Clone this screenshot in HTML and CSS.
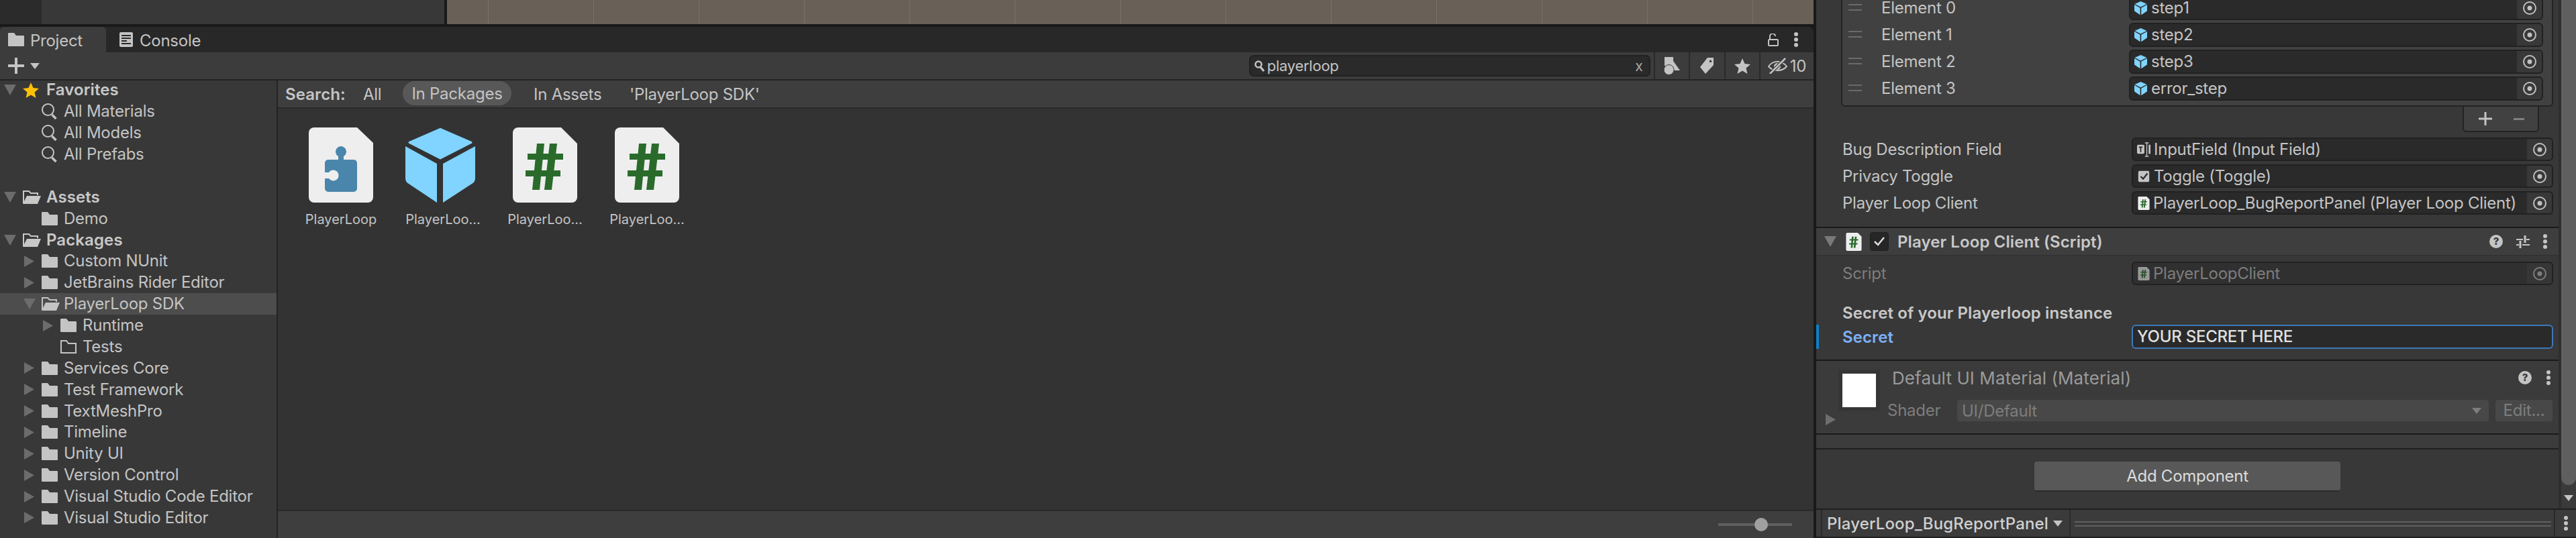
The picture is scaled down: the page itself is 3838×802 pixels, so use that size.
FILE: index.html
```html
<!DOCTYPE html>
<html lang="en">
<head>
<meta charset="utf-8">
<title>Unity Editor - Project and Inspector</title>
<link rel="stylesheet" href="styles.css">
</head>
<body>
<svg class="defs" width="0" height="0" aria-hidden="true">
  <symbol id="folder" viewBox="0 0 24 20"><path d="M1 0h8l3 4h11a1 1 0 0 1 1 1v14a1 1 0 0 1-1 1H1a1 1 0 0 1-1-1V1a1 1 0 0 1 1-1z" fill="currentColor"/></symbol>
  <symbol id="folder-open" viewBox="0 0 27 20"><path d="M1 19V1h8l3 3h10v3" fill="none" stroke="currentColor" stroke-width="2"/><path d="M6 8h21l-5 12H0z" fill="currentColor"/></symbol>
  <symbol id="folder-line" viewBox="0 0 24 20"><path d="M1 19V1h8l3 4h11v14z" fill="none" stroke="currentColor" stroke-width="2"/></symbol>
  <symbol id="mag" viewBox="0 0 24 24"><circle cx="9.500" cy="9.500" r="8.500" fill="none" stroke="currentColor" stroke-width="2"/><path d="M15.500 17l6 6" stroke="currentColor" stroke-width="3.500"/></symbol>
  <symbol id="cube" viewBox="0 0 112 112"><path d="M52 2.500L98 22.500 52 46 6 22.500z" fill="#80d4ff" stroke="#80d4ff" stroke-width="3" stroke-linejoin="round"/><path d="M0 28L47 54V112L5 84Q0 81 0 76z" fill="#80d4ff"/><path d="M104 28L56 54V112L99 84Q104 81 104 76z" fill="#80d4ff"/></symbol>
  <symbol id="cube-s" viewBox="0 0 104 112"><path d="M52 2.500L98 22.500 52 46 6 22.500z" fill="#80d4ff" stroke="#80d4ff" stroke-width="3" stroke-linejoin="round"/><path d="M0 28L47 54V112L5 84Q0 81 0 76z" fill="#80d4ff"/><path d="M104 28L56 54V112L99 84Q104 81 104 76z" fill="#80d4ff"/></symbol>
  <symbol id="script" viewBox="0 0 96 112"><path d="M8 0H72L96 24V104a8 8 0 0 1-8 8H8a8 8 0 0 1-8-8V8a8 8 0 0 1 8-8z" fill="#eee"/><path d="M36 24h11l-7 69H29zM55 24h11l-8 69H47z" fill="#2a6b2c"/><path d="M22 39h53v9H22zM19 64h52v9H19z" fill="#2a6b2c"/></symbol>
  <symbol id="puzzle" viewBox="0 0 96 112"><path d="M8 0H72L96 23V104a8 8 0 0 1-8 8H8a8 8 0 0 1-8-8V8a8 8 0 0 1 8-8z" fill="#eee"/><path d="M44 48V43a8 8 0 1 1 8 0V48H67a5 5 0 0 1 5 5V91a5 5 0 0 1-5 5H29a5 5 0 0 1-5-5V76H30a8 8 0 1 0 0-9H24V53a5 5 0 0 1 5-5z" fill="#4a86ab"/></symbol>
  <symbol id="target" viewBox="0 0 20 20"><circle cx="10" cy="10" r="9" fill="none" stroke="currentColor" stroke-width="2"/><circle cx="10" cy="10" r="3.500" fill="currentColor"/></symbol>
  <symbol id="dots" viewBox="0 0 6 22"><circle cx="3" cy="3" r="3" fill="currentColor"/><circle cx="3" cy="11" r="3" fill="currentColor"/><circle cx="3" cy="19" r="3" fill="currentColor"/></symbol>
  <symbol id="tri-r" viewBox="0 0 16 18"><path d="M0 0L16 9 0 18z" fill="currentColor"/></symbol>
  <symbol id="tri-d" viewBox="0 0 18 16"><path d="M0 0H18L9 16z" fill="currentColor"/></symbol>
</svg>
<div class="editor">
  <div class="left-col">
    <div class="top-strip">
      <div class="top-dark"></div>
      <div class="top-mid"></div>
      <div class="scene"></div>
    </div>
    <div class="project">
      <div class="tabs">
        <div class="tab tab-active">
          <svg class="tab-ic-folder"><use href="#folder"/></svg>
          <span>Project</span>
        </div>
        <div class="tab tab-console">
          <svg class="tab-ic-console" viewBox="0 0 20 22"><rect width="20" height="22" rx="2" fill="currentColor"/><path d="M3 5h14M3 9h14M3 13h8M3 17h14" stroke="#282828" stroke-width="2"/></svg>
          <span>Console</span>
        </div>
        <div class="tab-actions">
          <svg class="lock" viewBox="0 0 16 19"><path d="M3 8V4a4 4 0 0 1 8 0" fill="none" stroke="currentColor" stroke-width="2"/><rect x="1" y="9" width="14" height="9" rx="1" fill="none" stroke="currentColor" stroke-width="2"/></svg>
          <svg class="dots"><use href="#dots"/></svg>
        </div>
      </div>
      <div class="toolbar">
        <div class="create">
          <svg class="plus" viewBox="0 0 24 24"><path d="M0 10h24v4H0zM10 0h4v24h-4z" fill="currentColor"/></svg>
          <svg class="create-arrow" viewBox="0 0 14 9"><path d="M0 0H14L7 9z" fill="currentColor"/></svg>
        </div>
        <div class="search">
          <svg class="search-ic" viewBox="0 0 15 17"><circle cx="6" cy="6" r="4.500" fill="none" stroke="currentColor" stroke-width="2.500"/><path d="M9 10l5 6" stroke="currentColor" stroke-width="3"/></svg>
          <span class="search-text">playerloop</span>
          <span class="search-x">x</span>
        </div>
        <div class="tool-btn">
          <svg class="ic-type" viewBox="0 0 24 27"><rect x="1" width="13" height="13" fill="currentColor"/><path d="M14 6l10 14H11z" fill="currentColor"/><circle cx="7.500" cy="19" r="7.500" fill="currentColor" stroke="#3c3c3c" stroke-width="1"/></svg>
        </div>
        <div class="tool-btn">
          <svg class="ic-tag" viewBox="0 0 20 24"><path d="M11 0h9v11L8 24 0 14zM15.500 3.500a1.800 1.800 0 1 0 .01 0z" fill="currentColor" fill-rule="evenodd"/></svg>
        </div>
        <div class="tool-btn">
          <svg class="ic-star" viewBox="0 0 24 23"><path d="M12 0l3.500 8 8.500 1-6.500 5.500 2 8.500-7.500-4.500L4.500 23l2-8.500L0 9l8.500-1z" fill="currentColor"/></svg>
        </div>
        <div class="tool-btn tool-vis">
          <svg class="ic-eye" viewBox="0 0 30 24"><path d="M1 13c6-9 19-10 27 0-7 8-20 8-27 0z" fill="none" stroke="currentColor" stroke-width="2"/><circle cx="14" cy="13" r="5" fill="currentColor"/><path d="M3 24L26 1" stroke="#3c3c3c" stroke-width="5"/><path d="M3 24L26 1" stroke="currentColor" stroke-width="2.500"/></svg>
          <span>10</span>
        </div>
      </div>
      <div class="browser">
        <div class="tree-pane">
          <div class="tree">
            <div class="row l0 strong"><svg class="tri-d"><use href="#tri-d"/></svg><svg class="ic-fav" viewBox="0 0 24 23"><path d="M12 0l3.500 8 8.500 1-6.500 5.500 2 8.500-7.500-4.500L4.500 23l2-8.500L0 9l8.500-1z" fill="#ffc107"/></svg><span>Favorites</span></div>
            <div class="row l1 noarrow"><svg class="ic-mag"><use href="#mag"/></svg><span>All Materials</span></div>
            <div class="row l1 noarrow"><svg class="ic-mag"><use href="#mag"/></svg><span>All Models</span></div>
            <div class="row l1 noarrow"><svg class="ic-mag"><use href="#mag"/></svg><span>All Prefabs</span></div>
            <div class="row"></div>
            <div class="row l0 strong"><svg class="tri-d"><use href="#tri-d"/></svg><svg class="ic-open"><use href="#folder-open"/></svg><span>Assets</span></div>
            <div class="row l1 noarrow"><svg class="ic-folder"><use href="#folder"/></svg><span>Demo</span></div>
            <div class="row l0 strong"><svg class="tri-d"><use href="#tri-d"/></svg><svg class="ic-open"><use href="#folder-open"/></svg><span>Packages</span></div>
            <div class="row l1"><svg class="tri-r"><use href="#tri-r"/></svg><svg class="ic-folder"><use href="#folder"/></svg><span>Custom NUnit</span></div>
            <div class="row l1"><svg class="tri-r"><use href="#tri-r"/></svg><svg class="ic-folder"><use href="#folder"/></svg><span>JetBrains Rider Editor</span></div>
            <div class="row l1 selected"><svg class="tri-d"><use href="#tri-d"/></svg><svg class="ic-open-s"><use href="#folder-open"/></svg><span>PlayerLoop SDK</span></div>
            <div class="row l2"><svg class="tri-r"><use href="#tri-r"/></svg><svg class="ic-folder"><use href="#folder"/></svg><span>Runtime</span></div>
            <div class="row l2 noarrow"><svg class="ic-folder"><use href="#folder-line"/></svg><span>Tests</span></div>
            <div class="row l1"><svg class="tri-r"><use href="#tri-r"/></svg><svg class="ic-folder"><use href="#folder"/></svg><span>Services Core</span></div>
            <div class="row l1"><svg class="tri-r"><use href="#tri-r"/></svg><svg class="ic-folder"><use href="#folder"/></svg><span>Test Framework</span></div>
            <div class="row l1"><svg class="tri-r"><use href="#tri-r"/></svg><svg class="ic-folder"><use href="#folder"/></svg><span>TextMeshPro</span></div>
            <div class="row l1"><svg class="tri-r"><use href="#tri-r"/></svg><svg class="ic-folder"><use href="#folder"/></svg><span>Timeline</span></div>
            <div class="row l1"><svg class="tri-r"><use href="#tri-r"/></svg><svg class="ic-folder"><use href="#folder"/></svg><span>Unity UI</span></div>
            <div class="row l1"><svg class="tri-r"><use href="#tri-r"/></svg><svg class="ic-folder"><use href="#folder"/></svg><span>Version Control</span></div>
            <div class="row l1"><svg class="tri-r"><use href="#tri-r"/></svg><svg class="ic-folder"><use href="#folder"/></svg><span>Visual Studio Code Editor</span></div>
            <div class="row l1"><svg class="tri-r"><use href="#tri-r"/></svg><svg class="ic-folder"><use href="#folder"/></svg><span>Visual Studio Editor</span></div>
          </div>
        </div>
        <div class="main-pane">
          <div class="scope-bar">
            <span class="scope-label">Search:</span>
            <span class="scope scope-all">All</span>
            <span class="scope scope-on">In Packages</span>
            <span class="scope scope-assets">In Assets</span>
            <span class="scope scope-sdk">'PlayerLoop SDK'</span>
          </div>
          <div class="grid">
            <div class="tile"><svg class="tile-ic"><use href="#puzzle"/></svg><span class="tile-name">PlayerLoop</span></div>
            <div class="tile"><svg class="tile-ic-cube"><use href="#cube"/></svg><span class="tile-name">PlayerLoo...</span></div>
            <div class="tile"><svg class="tile-ic"><use href="#script"/></svg><span class="tile-name">PlayerLoo...</span></div>
            <div class="tile"><svg class="tile-ic"><use href="#script"/></svg><span class="tile-name">PlayerLoo...</span></div>
          </div>
          <div class="status-bar">
            <div class="zoom-slider"><div class="zoom-thumb"></div></div>
          </div>
        </div>
      </div>
    </div>
  </div>
  <div class="inspector">
    <div class="insp-top">
      <div class="insp-content">
        <div class="list">
          <div class="list-row"><span class="handle"></span><span class="el-label">Element 0</span><div class="field el-field"><svg class="ic-cube"><use href="#cube-s"/></svg><span class="field-text">step1</span><span class="picker"><svg class="target"><use href="#target"/></svg></span></div></div>
          <div class="list-row"><span class="handle"></span><span class="el-label">Element 1</span><div class="field el-field"><svg class="ic-cube"><use href="#cube-s"/></svg><span class="field-text">step2</span><span class="picker"><svg class="target"><use href="#target"/></svg></span></div></div>
          <div class="list-row"><span class="handle"></span><span class="el-label">Element 2</span><div class="field el-field"><svg class="ic-cube"><use href="#cube-s"/></svg><span class="field-text">step3</span><span class="picker"><svg class="target"><use href="#target"/></svg></span></div></div>
          <div class="list-row"><span class="handle"></span><span class="el-label">Element 3</span><div class="field el-field"><svg class="ic-cube"><use href="#cube-s"/></svg><span class="field-text">error_step</span><span class="picker"><svg class="target"><use href="#target"/></svg></span></div></div>
        </div>
        <div class="list-foot-wrap">
          <div class="list-foot">
            <svg class="foot-plus" viewBox="0 0 20 20"><path d="M0 8.500h20v3H0zM8.500 0h3v20h-3z" fill="currentColor"/></svg>
            <svg class="foot-minus" viewBox="0 0 16 3"><rect width="16" height="3" fill="currentColor"/></svg>
          </div>
        </div>
        <div class="prop first-prop"><span class="prop-label">Bug Description Field</span><div class="field"><svg class="ic-obj" viewBox="0 0 22 24"><rect y="4" width="12" height="15" rx="2" fill="#c4c4c4"/><path d="M3 7h6v2H7v7H5V9H3z" fill="#2a2a2a"/><path d="M13 1h6M13 23h6M16 1v22" stroke="#c4c4c4" stroke-width="1.500" fill="none"/><rect x="19" y="4" width="3" height="15" fill="#c4c4c4"/></svg><span class="field-text">InputField (Input Field)</span><span class="picker"><svg class="target"><use href="#target"/></svg></span></div></div>
        <div class="prop"><span class="prop-label">Privacy Toggle</span><div class="field"><svg class="ic-obj" viewBox="0 0 22 24"><rect x="2" y="3" width="18" height="18" rx="2" fill="#c4c4c4"/><path d="M6 12l4 4 7-9" fill="none" stroke="#2a2a2a" stroke-width="2.500"/></svg><span class="field-text">Toggle (Toggle)</span><span class="picker"><svg class="target"><use href="#target"/></svg></span></div></div>
        <div class="prop"><span class="prop-label">Player Loop Client</span><div class="field"><svg class="ic-script"><use href="#script"/></svg><span class="field-text">PlayerLoop_BugReportPanel (Player Loop Client)</span><span class="picker"><svg class="target"><use href="#target"/></svg></span></div></div>
        <div class="comp-head">
          <svg class="comp-tri"><use href="#tri-d"/></svg>
          <svg class="comp-ic"><use href="#script"/></svg>
          <span class="comp-check"><svg viewBox="0 0 16 14"><path d="M1 7l5 5 9-11" fill="none" stroke="#e0e0e0" stroke-width="2.500"/></svg></span>
          <span class="comp-title">Player Loop Client (Script)</span>
          <span class="help">?</span>
          <svg class="presets" viewBox="0 0 20 19"><path d="M0 6h10M15 6h5M0 14h4M9 14h11" stroke="currentColor" stroke-width="2"/><path d="M13 0v11M6 8v11" stroke="currentColor" stroke-width="3"/></svg>
          <svg class="dots"><use href="#dots"/></svg>
        </div>
        <div class="prop script-prop dim"><span class="prop-label">Script</span><div class="field"><svg class="ic-script"><use href="#script"/></svg><span class="field-text">PlayerLoopClient</span><span class="picker"><svg class="target"><use href="#target"/></svg></span></div></div>
        <div class="secret-head">Secret of your Playerloop instance</div>
        <div class="prop secret-prop"><span class="prop-label">Secret</span><div class="field focus-field"><span class="field-text">YOUR SECRET HERE</span></div></div>
        <div class="material">
          <svg class="mat-tri"><use href="#tri-r"/></svg>
          <div class="mat-swatch"></div>
          <div class="mat-body">
            <div class="mat-head">
              <span class="mat-title">Default UI Material (Material)</span>
              <span class="help">?</span>
              <svg class="dots"><use href="#dots"/></svg>
            </div>
            <div class="shader-row">
              <span class="shader-label">Shader</span>
              <div class="shader-drop"><span>UI/Default</span><svg class="drop-arrow" viewBox="0 0 14 9"><path d="M0 0H14L7 9z" fill="currentColor"/></svg></div>
              <div class="edit-btn">Edit...</div>
            </div>
          </div>
        </div>
        <div class="mat-gap"></div>
        <div class="add-wrap"><div class="add-btn">Add Component</div></div>
      </div>
      <div class="scrollbar">
        <div class="scroll-thumb"></div>
        <svg class="scroll-arrow" viewBox="0 0 14 9"><path d="M0 0H14L7 9z" fill="currentColor"/></svg>
      </div>
    </div>
    <div class="insp-bottom">
      <span class="pv-stub"></span>
      <span class="pv-name">PlayerLoop_BugReportPanel</span>
      <svg class="pv-arrow" viewBox="0 0 14 9"><path d="M0 0H14L7 9z" fill="currentColor"/></svg>
      <div class="pv-drag"></div>
      <div class="pv-menu"><svg class="dots"><use href="#dots"/></svg></div>
    </div>
  </div>
</div>
</body>
</html>
```
FILE: styles.css
```css
* { box-sizing: border-box; }
html, body { margin: 0; padding: 0; }
body {
  width: 3838px; height: 802px; overflow: hidden;
  background: #191919; color: #c4c4c4;
  font-family: "Inter", "Liberation Sans", sans-serif; font-size: 24px; letter-spacing: -0.25px;
}
svg { display: block; flex: none; }
.defs { position: absolute; }
.editor { display: flex; gap: 4px; width: 3838px; height: 802px; background: #191919; }

.left-col { width: 2702px; display: flex; flex-direction: column; gap: 4px; }
.top-strip { height: 36px; display: flex; }
.top-dark { width: 62px; background: #2b2b2b; }
.top-mid { width: 600px; background: #383838; }
.scene {
  flex: 1; margin-left: 4px; background-color: #696158;
  background-image: linear-gradient(90deg, #77716a 0 1px, transparent 1px);
  background-size: 157px 100%; background-position: 1317px 0;
}

.project { flex: 1; display: flex; flex-direction: column; min-height: 0; }
.tabs { height: 38px; display: flex; background: #282828; border-radius: 0 8px 0 0; color: #c4c4c4; }
.tab { display: flex; align-items: center; }
.tab span { padding-top: 2px; }
.tab-active { width: 158px; padding-left: 12px; gap: 9px; background: #3c3c3c; border-radius: 6px 6px 0 0; }
.tab-console { padding-left: 20px; gap: 10px; }
.tab-ic-folder { width: 24px; height: 20px; }
.tab-ic-console { width: 20px; height: 22px; }
.tab-actions { margin-left: auto; display: flex; align-items: center; padding-right: 23px; gap: 23px; }
.lock { width: 16px; height: 19px; }
.dots { width: 6px; height: 22px; color: #c4c4c4; }

.toolbar { height: 42px; display: flex; background: #3c3c3c; border-bottom: 2px solid #232323; }
.create { width: 1861px; display: flex; align-items: center; padding-left: 12px; gap: 9px; color: #c4c4c4; }
.plus { width: 24px; height: 24px; }
.create-arrow { width: 14px; height: 9px; }
.search {
  width: 598px; height: 32px; margin-top: 4px; padding: 0 9px 0 6px;
  display: flex; align-items: center; background: #2a2a2a; border: 2px solid #212121; border-radius: 7px;
}
.search-ic { width: 15px; height: 17px; margin-right: 4px; }
.search-text { flex: 1; font-size: 22px; }
.search-x { font-size: 21px; color: #a8a8a8; }
.tool-btn { width: 52.500px; margin-left: 0; display: flex; align-items: center; justify-content: center; border-left: 2px solid #2a2a2a; }
.tool-btn:nth-of-type(3) { margin-left: 5px; }
.ic-type { width: 24px; height: 27px; }
.ic-tag { width: 20px; height: 24px; }
.ic-star { width: 24px; height: 23px; }
.tool-vis { width: 81px; gap: 3px; }
.ic-eye { width: 30px; height: 24px; }

.browser { flex: 1; display: flex; min-height: 0; }
.tree-pane { width: 414px; background: #383838; border-right: 2px solid #232323; overflow: hidden; }
.tree { margin-top: -1.500px; }
.row { height: 31.875px; display: flex; align-items: center; white-space: nowrap; }
.row span { line-height: 32px; }
.strong { font-weight: 600; letter-spacing: 0.1px; color: #c8c8c8; }
.l0 { padding-left: 6px; }
.l1 { padding-left: 36px; }
.l2 { padding-left: 64px; }
.l1.noarrow { padding-left: 62px; }
.l2.noarrow { padding-left: 90px; }
.selected { background: #4d4d4d; }
.tri-d { width: 18px; height: 16px; color: #6c6c6c; margin-right: 10px; }
.tri-r { width: 15px; height: 17px; color: #6c6c6c; margin-right: 11px; }
.selected .tri-d { margin-left: -1px; margin-right: 9px; }
.ic-fav { width: 24px; height: 23px; margin-right: 11px; }
.ic-open { width: 27px; height: 20px; margin-right: 8px; }
.ic-open-s { width: 27px; height: 20px; margin-right: 6px; }
.ic-folder { width: 24px; height: 20px; margin-right: 9px; }
.ic-mag { width: 24px; height: 24px; margin-right: 9px; }

.main-pane { flex: 1; display: flex; flex-direction: column; min-width: 0; }
.scope-bar { height: 42px; display: flex; align-items: center; background: #3e3e3e; border-bottom: 2px solid #2a2a2a; padding-left: 11px; white-space: nowrap; }
.scope-label { font-weight: 600; letter-spacing: 0.1px; width: 116px; }
.scope-all { width: 59px; }
.scope-on { height: 36px; width: 162px; background: #585858; border-radius: 18px; display: flex; align-items: center; justify-content: center; margin-top: -2px; }
.scope-assets { margin-left: 33px; width: 143px; }
.grid { flex: 1; background: #333; display: flex; padding: 28px 0 0 18px; }
.tile { width: 152px; display: flex; flex-direction: column; align-items: center; }
.tile-ic { width: 96px; height: 112px; }
.tile-ic-cube { width: 112px; height: 112px; }
.tile-name { font-size: 20px; line-height: 28px; margin-top: 11px; letter-spacing: 0; }
.status-bar { height: 42px; background: #3e3e3e; border-top: 2px solid #2a2a2a; display: flex; align-items: center; justify-content: flex-end; padding-right: 32px; }
.zoom-slider { width: 110px; height: 4px; background: #5f5f5f; display: flex; align-items: center; padding-left: 54px; }
.zoom-thumb { width: 20px; height: 20px; border-radius: 50%; background: #a0a0a0; flex: none; }

.inspector { width: 1132px; display: flex; flex-direction: column; background: #383838; overflow: hidden; }
.insp-top { height: 758px; display: flex; }
.insp-content { width: 1106px; height: 758px; overflow: hidden; }
.list { margin: -6px 8px 0 37px; height: 165px; background: #414141; border: 2px solid #232323; border-top: 0; border-radius: 0 0 6px 6px; display: flex; flex-direction: column; gap: 4px; }
.list-row { height: 36px; display: flex; align-items: center; padding: 0 13px 0 9px; }
.handle { width: 20px; height: 10px; border-top: 2px solid #6a6a6a; border-bottom: 2px solid #6a6a6a; margin-top: -2px; }
.el-label { width: 398px; padding-left: 29px; flex: none; white-space: nowrap; line-height: 24px; }
.field { flex: 1; height: 100%; min-width: 0; display: flex; align-items: center; background: #2a2a2a; border: 2px solid #212121; border-radius: 6px; overflow: hidden; white-space: nowrap; }
.el-field { margin-left: 0; }
.field-text { flex: 1; min-width: 0; line-height: 24px; }
.ic-cube { width: 19px; height: 22px; margin: 0 6px 0 6px; }
.picker { width: 37px; height: 100%; background: #383838; display: flex; align-items: center; justify-content: center; flex: none; }
.target { width: 20px; height: 20px; color: #c0c0c0; }
.list-foot-wrap { display: flex; justify-content: flex-end; padding-right: 29px; height: 38px; margin-top: 0; }
.list-foot { width: 114px; height: 38px; background: #414141; border: 2px solid #232323; border-top: 0; border-radius: 0 0 6px 6px; display: flex; align-items: center; padding-left: 22px; gap: 32px; }
.foot-plus { width: 20px; height: 20px; color: #c4c4c4; }
.foot-minus { width: 16px; height: 3px; color: #808080; }
.prop { height: 35px; margin: 5px 8px 0 0; display: flex; align-items: center; padding-left: 39px; }
.first-prop { margin-top: 8px; }
.prop-label { width: 431px; flex: none; white-space: nowrap; }
.ic-obj { width: 20px; height: 22px; margin: 0 5px 0 6px; }
.ic-script { width: 18px; height: 20px; margin: 0 5px 0 7px; }

.comp-head { height: 43px; margin-top: 18px; border-top: 2px solid #1a1a1a; border-bottom: 1px solid #303030; background: #3e3e3e; display: flex; align-items: center; padding-left: 12px; }
.comp-tri { width: 18px; height: 16px; color: #7a7a7a; margin-right: 14px; }
.comp-ic { width: 24px; height: 27px; margin-right: 12px; }
.comp-check { width: 28px; height: 28px; background: #262626; border: 1px solid #1f1f1f; border-radius: 4px; display: flex; align-items: center; justify-content: center; margin-right: 13px; }
.comp-check svg { width: 16px; height: 14px; }
.comp-title { font-weight: 600; letter-spacing: 0.1px; color: #c8c8c8; flex: 1; white-space: nowrap; }
.help { width: 20px; height: 20px; border-radius: 50%; background: #c4c4c4; color: #383838; font-size: 15px; font-weight: 800; line-height: 20px; text-align: center; flex: none; letter-spacing: 0; }
.presets { width: 20px; height: 19px; color: #c4c4c4; margin: 0 20px; }
.comp-head .dots { margin-right: 17px; }

.script-prop { margin-top: 9px; }
.dim { color: #7d7d7d; }
.dim .field { background: #303030; }
.dim .ic-script { opacity: .55; }
.dim .picker { background: #363636; }
.dim .target { color: #7d7d7d; }
.secret-head { height: 35px; margin-top: 24px; padding-left: 39px; line-height: 36px; font-weight: 600; letter-spacing: 0.1px; color: #c8c8c8; white-space: nowrap; }
.secret-prop { height: 36px; margin: 0 8px 0 0; padding-left: 35px; border-left: 4px solid #0f80c8; }
.secret-prop .prop-label { color: #7bb0fa; font-weight: 600; letter-spacing: 0.1px; }
.focus-field { border-color: #3a79bb; color: #e0e0e0; font-weight: 500; padding-left: 6px; }

.material { height: 112px; margin-top: 16px; border-top: 2px solid #1a1a1a; border-bottom: 2px solid #1a1a1a; background: #3b3b3b; display: flex; padding-left: 14px; }
.mat-tri { width: 15px; height: 17px; color: #6e6e6e; align-self: flex-end; margin-bottom: 12px; margin-right: 10px; }
.mat-swatch { width: 50px; height: 50px; margin-top: 19px; background: #fff; box-shadow: 0 0 0 6px #363636; flex: none; }
.mat-body { flex: 1; margin-left: 17px; min-width: 0; }
.mat-head { height: 50px; display: flex; align-items: center; padding: 0 12px 0 7px; }
.mat-title { flex: 1; color: #9a9a9a; white-space: nowrap; font-size: 26px; letter-spacing: 0.1px; }
.mat-head .help { margin-right: 22px; }
.shader-row { height: 32px; margin-top: 8px; display: flex; padding-right: 9px; color: #7d7d7d; }
.shader-label { width: 104px; line-height: 32px; }
.shader-drop { width: 792px; background: #484848; border-radius: 4px; display: flex; align-items: center; justify-content: space-between; padding: 0 11px 0 7px; }
.drop-arrow { width: 14px; height: 9px; }
.edit-btn { width: 85px; margin-left: 10px; background: #484848; border-radius: 4px; text-align: center; line-height: 32px; }
.mat-gap { height: 22px; border-bottom: 2px solid #1f1f1f; background: #3c3c3c; }
.add-wrap { display: flex; justify-content: center; margin-top: 18px; }
.add-btn { width: 456px; height: 45px; background: #585858; border-bottom: 2px solid #2a2a2a; border-radius: 4px; text-align: center; line-height: 43px; color: #dcdcdc; }

.scrollbar { width: 26px; display: flex; flex-direction: column; border-left: 4px solid #2e2e2e; background: #3a3a3a; align-items: center; }
.scroll-thumb { width: 22px; height: 723px; background: #5f5f5f; border-radius: 0 0 11px 11px; }
.scroll-arrow { width: 14px; height: 9px; margin-top: 15px; color: #c4c4c4; }

.insp-bottom { height: 44px; border-top: 2px solid #1f1f1f; border-bottom: 2px solid #1f1f1f; background: #3b3b3b; display: flex; align-items: center; }
.pv-stub { width: 9px; height: 100%; border-right: 2px solid #2a2a2a; flex: none; }
.pv-name { padding-left: 7px; width: 344px; flex: none; font-weight: 500; letter-spacing: 0.15px; color: #d0d0d0; white-space: nowrap; }
.pv-arrow { width: 14px; height: 9px; color: #c4c4c4; }
.pv-drag { flex: 1; height: 100%; margin-left: 10px; border-left: 2px solid #2a2a2a; background: linear-gradient(#5f5f5f, #5f5f5f) 6px 17px / 710px 2px no-repeat, linear-gradient(#5f5f5f, #5f5f5f) 6px 23px / 710px 2px no-repeat; }
.pv-menu { width: 33px; height: 100%; flex: none; border-left: 2px solid #2a2a2a; display: flex; align-items: center; justify-content: center; }
```
